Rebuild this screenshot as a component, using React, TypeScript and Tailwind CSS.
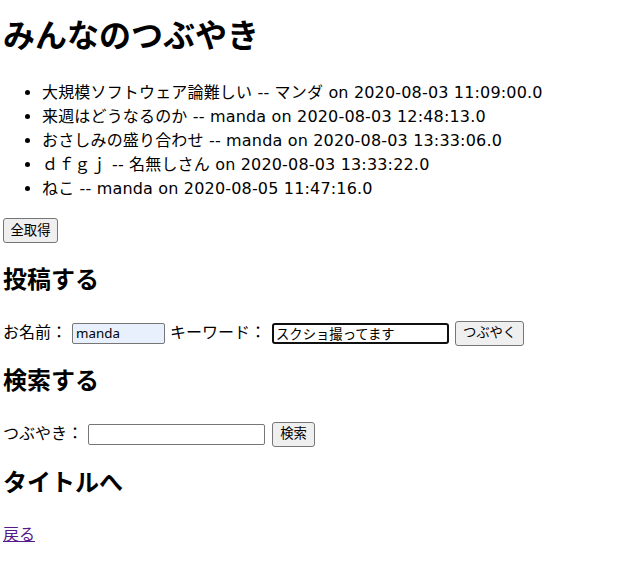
const posts = [
  '大規模ソフトウェア論難しい -- マンダ on 2020-08-03 11:09:00.0',
  '来週はどうなるのか -- manda on 2020-08-03 12:48:13.0',
  'おさしみの盛り合わせ -- manda on 2020-08-03 13:33:06.0',
  'ｄｆｇｊ -- 名無しさん on 2020-08-03 13:33:22.0',
  'ねこ -- manda on 2020-08-05 11:47:16.0',
];

const btn =
  'h-[25px] px-[6px] bg-[#efefef] border border-[#767676] rounded-[3px] text-[13.33px] text-black leading-none';

const App = () => {
  return (
    <div className="min-h-[580px] bg-white pl-[3px] text-black font-[family-name:'DejaVu_Sans','Noto_Sans_CJK_JP',sans-serif]">
      <h1 className="mt-[9px] text-[32px] font-bold leading-[48px] font-[family-name:'Noto_Sans_CJK_JP',sans-serif]">
        みんなのつぶやき
      </h1>

      <ul className="mt-[24px] list-disc pl-[39px] text-[16px] leading-[24px] tracking-[0.17px]">
        {posts.map((p) => (
          <li key={p}>{p}</li>
        ))}
      </ul>

      <button className={`mt-[17px] block w-[55px] ${btn}`}>全取得</button>

      <h2 className="mt-[19px] text-[24px] font-bold leading-[36px]">投稿する</h2>
      <div className="mt-[22px] flex h-[26px] items-center text-[16px]">
        <span>お名前：</span>
        <input
          defaultValue="manda"
          className="ml-[5px] h-[21px] w-[93px] rounded-[2px] border border-[#767676] bg-[#e8f0fe] px-[3px] text-[13.33px] outline-none font-[family-name:'Noto_Sans',sans-serif]"
        />
        <span className="ml-[5px]">キーワード：</span>
        <input
          defaultValue="スクショ撮ってます"
          className="ml-[6px] h-[21px] w-[177px] rounded-[3px] border-2 border-[#101010] px-[2px] text-[13.33px] outline-none"
        />
        <button className={`ml-[6px] w-[69px] ${btn}`}>つぶやく</button>
      </div>

      <h2 className="mt-[17px] text-[24px] font-bold leading-[36px]">検索する</h2>
      <div className="mt-[22px] flex h-[26px] items-center text-[16px]">
        <span>つぶやき：</span>
        <input className="ml-[5px] h-[21px] w-[177px] rounded-[2px] border border-[#767676] px-[3px] text-[13.33px] outline-none" />
        <button className={`ml-[7px] w-[43px] ${btn}`}>検索</button>
      </div>

      <h2 className="mt-[18px] text-[24px] font-bold leading-[36px]">タイトルへ</h2>
      <a href="#" className="mt-[22px] inline-block text-[16px] leading-[24px] text-[#551a8b] underline">
        戻る
      </a>
    </div>
  );
};

export default App;
